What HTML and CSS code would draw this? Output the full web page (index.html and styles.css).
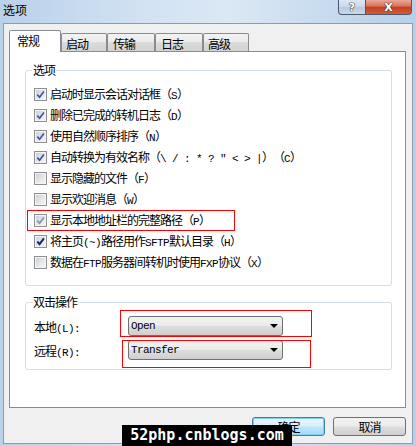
FILE: index.html
```html
<!DOCTYPE html>
<html>
<head>
<meta charset="utf-8">
<title>选项</title>
<link rel="stylesheet" href="styles.css">
</head>
<body>
<div class="window">
  <div class="titlebar">
    <span class="title">选项</span>
    <div class="caption-btns">
      <span class="cap help">?</span>
      <span class="cap close">X</span>
    </div>
  </div>
  <div class="client">
    <div class="tabs">
      <div class="tab active">常规</div>
      <div class="tab w46">启动</div>
      <div class="tab w48">传输</div>
      <div class="tab w48">日志</div>
      <div class="tab w46">高级</div>
    </div>
    <div class="panel">
      <fieldset class="group g1">
        <legend>选项</legend>
        <label class="row"><span class="cb"><svg viewBox="0 0 9 9" class="chk"><path d="M1.3 4.6 L3.6 7.2 L7.9 1.4"/></svg></span><span class="txt">启动时显示会话对话框（<span class="en">S</span>）</span></label>
        <label class="row"><span class="cb"><svg viewBox="0 0 9 9" class="chk"><path d="M1.3 4.6 L3.6 7.2 L7.9 1.4"/></svg></span><span class="txt">删除已完成的转机日志（<span class="en">D</span>）</span></label>
        <label class="row"><span class="cb"><svg viewBox="0 0 9 9" class="chk"><path d="M1.3 4.6 L3.6 7.2 L7.9 1.4"/></svg></span><span class="txt">使用自然顺序排序（<span class="en">N</span>）</span></label>
        <label class="row"><span class="cb"><svg viewBox="0 0 9 9" class="chk"><path d="M1.3 4.6 L3.6 7.2 L7.9 1.4"/></svg></span><span class="txt">自动转换为有效名称（<span class="en">\ / : * ? " &lt; &gt; |</span>）（<span class="en">C</span>）</span></label>
        <label class="row"><span class="cb"></span><span class="txt">显示隐藏的文件（<span class="en">F</span>）</span></label>
        <label class="row"><span class="cb"></span><span class="txt">显示欢迎消息（<span class="en">W</span>）</span></label>
        <label class="row"><span class="cb"><svg viewBox="0 0 9 9" class="chk faded"><path d="M1.3 4.6 L3.6 7.2 L7.9 1.4"/></svg></span><span class="txt">显示本地地址栏的完整路径（<span class="en">P</span>）</span><span class="redbox rb-row"></span></label>
        <label class="row"><span class="cb"><svg viewBox="0 0 9 9" class="chk dark"><path d="M1.3 4.6 L3.6 7.2 L7.9 1.4"/></svg></span><span class="txt">将主页<span class="en">(~)</span>路径用作<span class="en">SFTP</span>默认目录（<span class="en">H</span>）</span></label>
        <label class="row"><span class="cb"></span><span class="txt">数据在<span class="en">FTP</span>服务器间转机时使用<span class="en">FXP</span>协议（<span class="en">X</span>）</span></label>
      </fieldset>
      <fieldset class="group g2">
        <legend>双击操作</legend>
        <div class="frow">
          <span class="flabel">本地<span class="en">(L):</span></span>
          <div class="combo"><span class="en">Open</span><span class="arrow"></span></div>
          <span class="redbox rb-1"></span>
        </div>
        <div class="frow">
          <span class="flabel">远程<span class="en">(R):</span></span>
          <div class="combo"><span class="en">Transfer</span><span class="arrow"></span></div>
          <span class="redbox rb-2"></span>
        </div>
      </fieldset>
    </div>
    <div class="buttons">
      <button class="btn default">确定</button>
      <button class="btn">取消</button>
    </div>
  </div>
  <div class="watermark">52php.cnblogs.com</div>
</div>
</body>
</html>
```
FILE: styles.css
```css
* { box-sizing: border-box; }
html, body { margin: 0; padding: 0; }
body {
  width: 416px;
  height: 446px;
  overflow: hidden;
  font-family: "Noto Sans CJK SC", sans-serif;
  font-size: 12px;
  letter-spacing: -1px;
  text-spacing-trim: space-all;
  color: #000;
}
.en {
  font-family: "Liberation Mono", monospace;
  font-size: 11px;
  letter-spacing: -0.6px;
}
.window {
  position: relative;
  width: 416px;
  height: 446px;
  background: linear-gradient(to right, #bad1ea, #d2e2f3 35%, #dbe8f5 55%, #c6d9ee 80%, #b8cfe8);
  display: flex;
  flex-direction: column;
}
.titlebar {
  height: 23px;
  flex: none;
  display: flex;
  align-items: flex-start;
  padding-left: 3px;
}
.title {
  font-size: 12px;
  letter-spacing: 0;
  line-height: 14px;
  padding-top: 3px;
}
.caption-btns {
  margin-left: auto;
  margin-right: 4px;
  display: flex;
}
.cap {
  height: 15px;
  border: 1px solid #4b5a6e;
  border-top: none;
  display: flex;
  align-items: center;
  justify-content: center;
  color: #fff;
  font-family: "DejaVu Sans", sans-serif;
  font-weight: bold;
  font-size: 11px;
  letter-spacing: 0;
  text-shadow: 0 0 1px #333, 0 0 1px #333, 0 0 1px #333;
}
.help {
  width: 28px;
  border-radius: 0 0 0 4px;
  background: linear-gradient(#dde7f3, #c9d8ea 50%, #b6c9df 50%, #c9d9eb);
}
.close {
  width: 46px;
  border-left: none;
  border-radius: 0 0 4px 0;
  background: linear-gradient(#e9a998, #d87058 45%, #c4401f 50%, #d35a3c);
}
.client {
  margin: 0 3px;
  height: 421px;
  border: 1px solid #8d9bab;
  background: #f0f0f0;
  padding: 6px 6px 0 5px;
}
.tabs {
  display: flex;
  align-items: flex-end;
  height: 22px;
  margin-bottom: -1px;
  position: relative;
  z-index: 1;
}
.tab {
  height: 18px;
  margin-bottom: 1px;
  border: 1px solid #898c95;
  border-bottom: none;
  border-radius: 2px 2px 0 0;
  background: linear-gradient(#f3f3f3, #ebebeb 45%, #dcdcdc 50%, #d2d2d2);
  padding: 2px 0 0 4px;
  line-height: 15px;
}
.tab.active {
  width: 52px;
  height: 22px;
  margin-bottom: 0;
  background: #fff;
  padding-left: 7px;
}
.w46 { width: 46px; }
.w48 { width: 48px; padding-left: 5px; }
.panel {
  height: 357px;
  border: 1px solid #898c95;
  background: #fff;
  padding: 0 13px 0 15px;
}
.group {
  margin: 11px 0 0;
  border: 1px solid #d5dfe5;
  border-radius: 3px;
  padding: 7px 0 12px 6px;
  min-width: 0;
}
.group legend {
  padding: 0 1px;
  line-height: 14px;
}
.row {
  display: flex;
  align-items: center;
  height: 21px;
  margin-left: 2px;
  position: relative;
}
.cb {
  width: 13px;
  height: 13px;
  flex: none;
  margin-right: 3px;
  border: 1px solid #8e8f8f;
  background: linear-gradient(135deg, #c9ccd2, #e6e7e9 55%, #f8f8f8);
  box-shadow: inset 0 0 0 1px #f4f4f4;
  display: flex;
  align-items: center;
  justify-content: center;
}
.chk {
  width: 9px;
  height: 9px;
  fill: none;
  stroke: #3a57a0;
  stroke-width: 1.7;
}
.chk.faded { stroke: #8190b6; }
.chk.dark { stroke: #14286f; stroke-width: 2; }
.txt { white-space: nowrap; line-height: 14px; }
.redbox {
  position: absolute;
  z-index: 2;
  border: 1px solid #ff0000;
  pointer-events: none;
}
.rb-row { left: -7px; top: 0; width: 208px; height: 21px; }
.g2 {
  margin-top: 9px;
  padding: 7px 0 9px 6px;
}
.frow {
  position: relative;
  display: flex;
  align-items: center;
  height: 20px;
  margin-left: 2px;
}
.frow + .frow { margin-top: 4px; }
.rb-1 { left: 86px; top: -6px; width: 192px; height: 27px; }
.rb-2 { left: 88px; top: 0; width: 189px; height: 28px; }
.flabel {
  width: 94px;
  white-space: nowrap;
}
.combo {
  width: 155px;
  height: 20px;
  border: 1px solid #707070;
  border-radius: 3px;
  background: linear-gradient(#f2f2f2, #ebebeb 48%, #dddddd 52%, #cfcfcf);
  display: flex;
  align-items: center;
  padding-left: 2px;
}
.arrow {
  margin-left: auto;
  margin-right: 4px;
  width: 0;
  height: 0;
  border-left: 4px solid transparent;
  border-right: 4px solid transparent;
  border-top: 4px solid #000;
}
.buttons {
  display: flex;
  justify-content: flex-end;
  gap: 8px;
  margin-top: 9px;
}
.btn {
  width: 73px;
  height: 19px;
  padding: 0;
  border: 1px solid #707070;
  border-radius: 3px;
  background: linear-gradient(#f2f2f2, #ebebeb 48%, #dddddd 52%, #cfcfcf);
  font-family: "Noto Sans CJK SC", sans-serif;
  font-size: 12px;
  letter-spacing: -1px;
  line-height: 15px;
  color: #000;
}
.btn.default {
  border-color: #3c7fb1;
  box-shadow: inset 0 0 0 1px #7fd0f4;
  background: linear-gradient(#eaf6fd, #d9f0fc 48%, #bee6fd 52%, #a7d9f5);
}
.watermark {
  position: absolute;
  left: 122px;
  top: 425px;
  width: 170px;
  height: 21px;
  background: #000;
  color: #fff;
  font-family: "DejaVu Sans Mono", monospace;
  font-size: 15px;
  font-weight: bold;
  letter-spacing: 0;
  line-height: 21px;
  text-align: center;
}
```
